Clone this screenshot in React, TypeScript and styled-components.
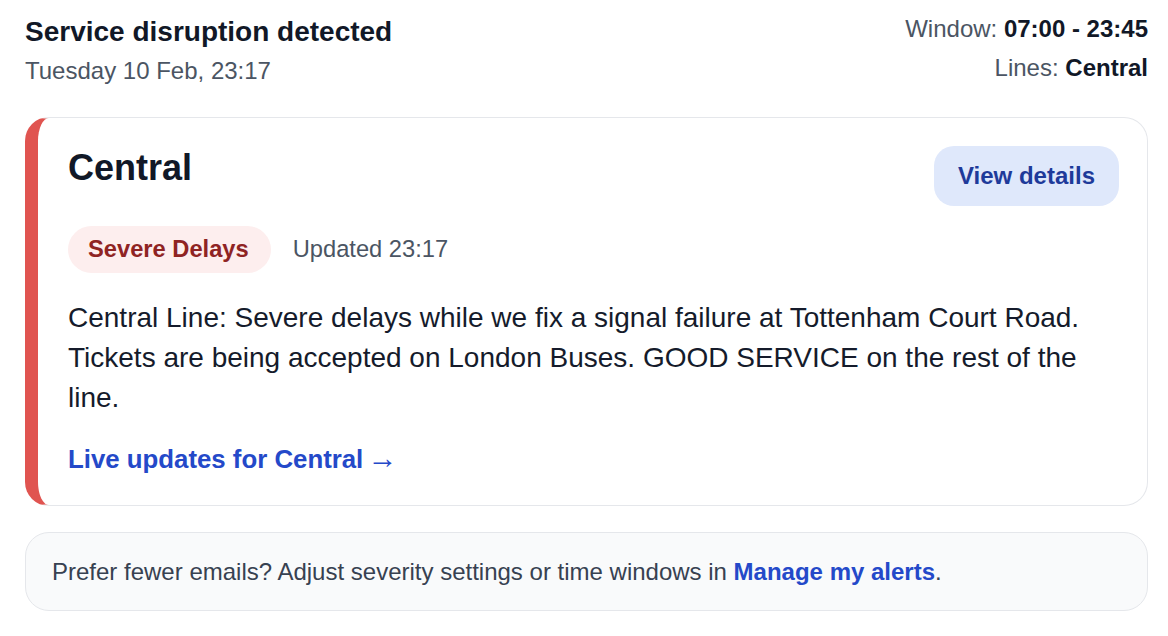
import React from "react";
import styled, { createGlobalStyle } from "styled-components";

const GlobalStyle = createGlobalStyle`
  html, body { margin: 0; padding: 0; background: #ffffff; }
  body { font-family: "Liberation Sans", Arial, Helvetica, sans-serif; -webkit-font-smoothing: antialiased; }
  * { box-sizing: border-box; }
`;

const Page = styled.div`
  width: 1168px;
  padding: 0 20px 24px 25px;
`;

const Header = styled.header`
  display: flex;
  justify-content: space-between;
  align-items: flex-start;
`;

const HeaderLeft = styled.div`
  display: flex;
  flex-direction: column;
`;

const Title = styled.h1`
  margin: 14px 0 0;
  font-size: 28px;
  line-height: 36px;
  font-weight: 700;
  color: #111827;
`;

const DateLine = styled.div`
  margin-top: 2px;
  font-size: 24px;
  line-height: 38px;
  color: #4b5563;
`;

const HeaderRight = styled.div`
  padding-top: 9px;
  text-align: right;
`;

const MetaLine = styled.div`
  font-size: 24px;
  line-height: 39px;
  color: #4b5563;
  white-space: nowrap;
`;

const MetaValue = styled.strong`
  font-weight: 700;
  color: #111827;
`;

const Card = styled.section<{ $accent: string }>`
  margin-top: 27px;
  border: 1px solid #e5e7eb;
  border-left: 13px solid ${(p) => p.$accent};
  border-radius: 24px;
  padding: 28px 28px 26px 30px;
  background: #ffffff;
`;

const CardTop = styled.div`
  display: flex;
  justify-content: space-between;
  align-items: flex-start;
`;

const LineName = styled.h2`
  margin: 0;
  font-size: 36px;
  line-height: 44px;
  font-weight: 700;
  color: #111827;
`;

const DetailsButton = styled.a`
  display: inline-flex;
  align-items: center;
  height: 60px;
  padding: 0 24px;
  border-radius: 20px;
  background: #dfe8fb;
  color: #1e3a9a;
  font-size: 24px;
  font-weight: 700;
  text-decoration: none;
  white-space: nowrap;
`;

const StatusRow = styled.div`
  display: flex;
  align-items: center;
  gap: 22px;
  margin-top: 20px;
`;

const Badge = styled.span`
  display: inline-block;
  padding: 10px 22px 10px 20px;
  border-radius: 24px;
  background: #fdeeee;
  color: #8f2323;
  font-size: 23.7px;
  line-height: 27px;
  font-weight: 700;
`;

const Updated = styled.span`
  font-size: 23.7px;
  color: #4b5563;
`;

const Description = styled.p`
  margin: 25px 0 0;
  font-size: 28px;
  line-height: 40px;
  color: #151b2b;
`;

const LiveLink = styled.a`
  display: block;
  margin-top: 21px;
  font-size: 25.8px;
  line-height: 40px;
  font-weight: 700;
  color: #2449c9;
  text-decoration: none;
`;

const Arrow = styled.span`
  margin-left: -3px;
  font-size: 30px;
  font-weight: 400;
  line-height: 0;
`;

const Footer = styled.div`
  margin-top: 26px;
  padding: 20px 26px 19px;
  border: 1px solid #e5e7eb;
  border-radius: 24px;
  background: #f9fafb;
  font-size: 24px;
  line-height: 38px;
  color: #374151;
`;

const FooterLink = styled.a`
  font-weight: 700;
  color: #2449c9;
  text-decoration: none;
`;

export default function App() {
  return (
    <>
      <GlobalStyle />
      <Page>
        <Header>
          <HeaderLeft>
            <Title>Service disruption detected</Title>
            <DateLine>Tuesday 10 Feb, 23:17</DateLine>
          </HeaderLeft>
          <HeaderRight>
            <MetaLine>
              Window: <MetaValue>07:00 - 23:45</MetaValue>
            </MetaLine>
            <MetaLine>
              Lines: <MetaValue>Central</MetaValue>
            </MetaLine>
          </HeaderRight>
        </Header>

        <Card $accent="#e05450">
          <CardTop>
            <LineName>Central</LineName>
            <DetailsButton href="#">View details</DetailsButton>
          </CardTop>
          <StatusRow>
            <Badge>Severe Delays</Badge>
            <Updated>Updated 23:17</Updated>
          </StatusRow>
          <Description>
            Central Line: Severe delays while we fix a signal failure at Tottenham Court Road.
            Tickets are being accepted on London Buses. GOOD SERVICE on the rest of the line.
          </Description>
          <LiveLink href="#">
            Live updates for Central <Arrow>→</Arrow>
          </LiveLink>
        </Card>

        <Footer>
          Prefer fewer emails? Adjust severity settings or time windows in{" "}
          <FooterLink href="#">Manage my alerts</FooterLink>.
        </Footer>
      </Page>
    </>
  );
}
